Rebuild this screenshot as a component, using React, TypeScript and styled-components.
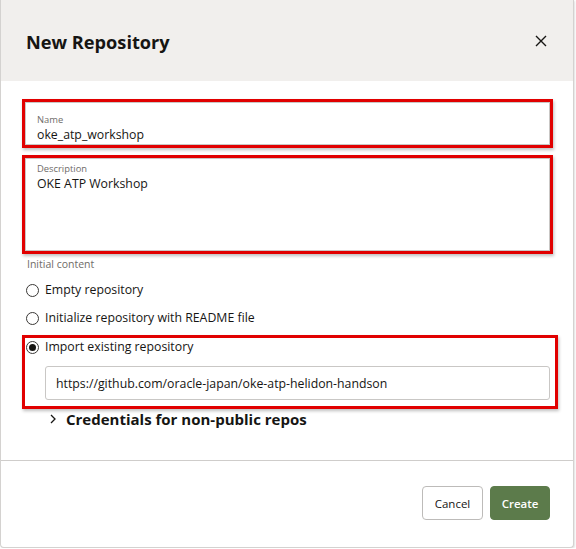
import React from "react";
import styled, { createGlobalStyle } from "styled-components";

const Global = createGlobalStyle`
  *, *::before, *::after { box-sizing: border-box; }
  html, body { margin: 0; padding: 0; background: #ffffff; }
  body { font-family: "Open Sans", "Noto Sans", sans-serif; color: #161513; }
`;

const Dialog = styled.div`
  width: 574px;
  height: 548px;
  border: 1px solid #d4d2d0;
  border-top: none;
  border-radius: 0 0 4px 4px;
  box-shadow: 1px 1px 2px rgba(0,0,0,0.12);
  background: #fff;
  display: flex;
  flex-direction: column;
  overflow: hidden;
`;

const Header = styled.div`
  height: 81px;
  flex: none;
  background: #f1efed;
  display: flex;
  align-items: center;
  justify-content: space-between;
  padding: 0 24px 0 25px;
`;

const Title = styled.h1`
  margin: 0;
  font-size: 18.2px;
  font-weight: 700;
  color: #161513;
  padding-top: 2px;
`;

const CloseBtn = styled.button`
  border: none;
  background: none;
  padding: 0;
  width: 16px;
  height: 16px;
  display: flex;
  align-items: center;
  justify-content: center;
  cursor: pointer;
`;

const Body = styled.div`
  flex: 1;
  min-height: 0;
  padding: 18px 0 0 21px;
  display: flex;
  flex-direction: column;
`;

const Highlight = styled.div<{ $w: number; $mt?: number }>`
  width: ${(p) => p.$w}px;
  margin-top: ${(p) => p.$mt ?? 0}px;
  border: 3px solid #e10000;
  box-shadow: 1px 2px 3px rgba(0,0,0,0.25);
`;

const Field = styled.div<{ $h: number; $pt: number }>`
  height: ${(p) => p.$h}px;
  border: 1px solid #c9c7c5;
  background: #fff;
  padding: ${(p) => p.$pt}px 11px 0;
  display: flex;
  flex-direction: column;
`;

const FieldLabel = styled.span`
  font-size: 9.4px;
  line-height: 12px;
  color: #6f6c69;
`;

const FieldValue = styled.span`
  font-size: 12.3px;
  line-height: 18px;
  color: #161513;
`;

const SectionLabel = styled.div`
  margin-top: 3px;
  padding-left: 5px;
  font-size: 10.5px;
  line-height: 15px;
  color: #6f6c69;
`;

const RadioRow = styled.label<{ $mt: number; $pl: number }>`
  display: flex;
  align-items: center;
  gap: 6px;
  margin-top: ${(p) => p.$mt}px;
  padding-left: ${(p) => p.$pl}px;
  font-size: 12.3px;
  line-height: 18px;
  color: #161513;
`;

const RadioCircle = styled.span<{ $checked?: boolean }>`
  width: 13px;
  height: 13px;
  border-radius: 50%;
  border: 1px solid #3a3836;
  display: flex;
  align-items: center;
  justify-content: center;
  flex: none;
  &::after {
    content: "";
    display: ${(p) => (p.$checked ? "block" : "none")};
    width: 7px;
    height: 7px;
    border-radius: 50%;
    background: #161513;
  }
`;

const ImportInner = styled.div`
  padding: 0 0 6px 0;
  display: flex;
  flex-direction: column;
`;

const UrlInput = styled.div`
  margin: 10px 0 0 20px;
  width: 505px;
  height: 34px;
  border: 1px solid #c9c7c5;
  border-radius: 3px;
  display: flex;
  align-items: center;
  padding-left: 10px;
  font-size: 12.3px;
  color: #161513;
`;

const Disclosure = styled.div`
  display: flex;
  align-items: center;
  gap: 10px;
  margin: 0 0 0 28px;
  font-size: 15px;
  font-weight: 700;
  line-height: 20px;
  color: #161513;
`;

const Footer = styled.div`
  flex: none;
  height: 87px;
  border-top: 1px solid #cfcdcb;
  display: flex;
  justify-content: flex-end;
  align-items: flex-start;
  gap: 7px;
  padding: 25px 23px 0 0;
`;

const Button = styled.button<{ $primary?: boolean; $w: number }>`
  width: ${(p) => p.$w}px;
  height: 34px;
  padding: 0;
  border-radius: 4px;
  font-family: "Open Sans", "Noto Sans", sans-serif;
  font-size: 11.5px;
  font-weight: ${(p) => (p.$primary ? 600 : 400)};
  border: 1px solid ${(p) => (p.$primary ? "#5c7b4b" : "#bdbbb9")};
  background: ${(p) => (p.$primary ? "#5c7b4b" : "#fff")};
  color: ${(p) => (p.$primary ? "#fff" : "#161513")};
`;

export default function App() {
  return (
    <>
      <Global />
      <Dialog>
        <Header>
          <Title>New Repository</Title>
          <CloseBtn aria-label="Close">
            <svg width="12" height="12" viewBox="0 0 12 12">
              <path d="M1 1L11 11M11 1L1 11" stroke="#161513" strokeWidth="1.4" />
            </svg>
          </CloseBtn>
        </Header>
        <Body>
          <Highlight $w={531}>
            <Field $h={43} $pt={11}>
              <FieldLabel>Name</FieldLabel>
              <FieldValue>oke_atp_workshop</FieldValue>
            </Field>
          </Highlight>
          <Highlight $w={531} $mt={7}>
            <Field $h={93} $pt={4}>
              <FieldLabel>Description</FieldLabel>
              <FieldValue>OKE ATP Workshop</FieldValue>
            </Field>
          </Highlight>
          <SectionLabel>Initial content</SectionLabel>
          <RadioRow $mt={9} $pl={4}>
            <RadioCircle />
            Empty repository
          </RadioRow>
          <RadioRow $mt={10} $pl={4}>
            <RadioCircle />
            Initialize repository with README file
          </RadioRow>
          <Highlight $w={536} $mt={8}>
            <ImportInner>
              <RadioRow $mt={0} $pl={1}>
                <RadioCircle $checked />
                Import existing repository
              </RadioRow>
              <UrlInput>https://github.com/oracle-japan/oke-atp-helidon-handson</UrlInput>
            </ImportInner>
          </Highlight>
          <Disclosure>
            <svg width="6" height="10" viewBox="0 0 6 10">
              <path d="M1 1L5 5L1 9" fill="none" stroke="#161513" strokeWidth="1.3" />
            </svg>
            Credentials for non-public repos
          </Disclosure>
        </Body>
        <Footer>
          <Button $w={61}>Cancel</Button>
          <Button $primary $w={60}>Create</Button>
        </Footer>
      </Dialog>
    </>
  );
}
